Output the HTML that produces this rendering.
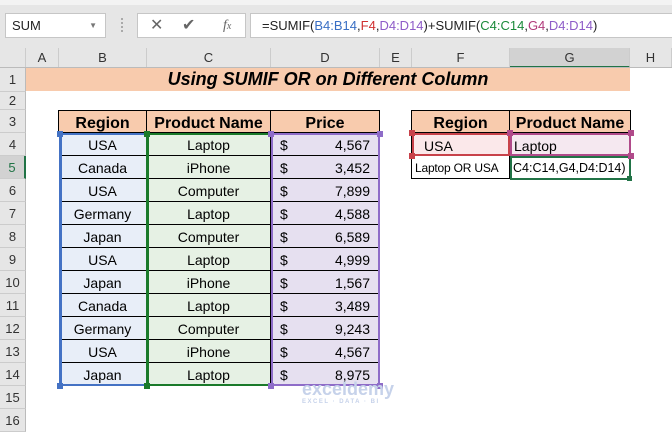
<!DOCTYPE html><html><head><style>
body{margin:0;width:672px;height:425px;overflow:hidden;background:#fff;font-family:"Liberation Sans",Calibri,sans-serif;position:relative}
.a{position:absolute;box-sizing:border-box}
.hd{position:absolute;top:48px;height:20px;font-size:13px;color:#333;text-align:center;line-height:20px;border-right:1px solid #ccc;background:#e6e6e6;box-sizing:border-box}
.rh{position:absolute;left:0;width:26px;font-size:13px;color:#333;text-align:center;background:#e6e6e6;border-bottom:1px solid #ccc;box-sizing:border-box;border-right:1px solid #bbb}
.c{position:absolute;box-sizing:border-box;font-size:14px;color:#000;text-align:center;line-height:25px;border-bottom:1px solid #000;border-right:1px solid #000}
.h{font-weight:bold;font-size:16px;background:#f8cbad;line-height:25px}
.hdl{position:absolute;width:6px;height:6px}
</style></head><body>
<div class="a" style="left:0;top:0;width:672px;height:48px;background:#e6e6e6"></div>
<div class="a" style="left:0;top:0;width:672px;height:5px;background:#f3f3f3"></div>
<div class="a" style="left:5px;top:13px;width:101px;height:25px;background:#fff;border:1px solid #c6c6c6;font-size:13px;line-height:23px;padding-left:6px;color:#222">SUM<span style="position:absolute;right:8px;top:0;font-size:8px;color:#777">▼</span></div>
<div class="a" style="left:121px;top:18px;width:2px;height:14px;border-left:2px dotted #aaa"></div>
<div class="a" style="left:137px;top:13px;width:109px;height:25px;background:#fff;border:1px solid #c6c6c6;font-size:16px;line-height:23px;color:#666"><span style="position:absolute;left:12px">✕</span><span style="position:absolute;left:44px">✔</span><span style="position:absolute;left:85px;font-family:'Liberation Serif';font-style:italic;font-size:14px">f<span style="font-size:10px">x</span></span></div>
<div class="a" style="left:250px;top:13px;width:430px;height:25px;background:#fff;border:1px solid #c6c6c6;font-size:13px;line-height:23px;padding-left:11px;color:#222">=SUMIF(<span style="color:#3a6fc4">B4:B14</span>,<span style="color:#d03030">F4</span>,<span style="color:#8e5cc8">D4:D14</span>)+SUMIF(<span style="color:#1a8a3a">C4:C14</span>,<span style="color:#b03a7a">G4</span>,<span style="color:#8e5cc8">D4:D14</span>)</div>
<div class="hd" style="left:0;width:26px"></div>
<div class="hd" style="left:26px;width:33px">A</div>
<div class="hd" style="left:59px;width:88px">B</div>
<div class="hd" style="left:147px;width:124px">C</div>
<div class="hd" style="left:271px;width:109px">D</div>
<div class="hd" style="left:380px;width:32px">E</div>
<div class="hd" style="left:412px;width:98px">F</div>
<div class="hd" style="left:510px;width:120px;background:#d2d2d2;border-bottom:2px solid #217346">G</div>
<div class="hd" style="left:630px;width:42px">H</div>
<div class="a" style="left:0;top:67px;width:672px;height:1px;background:#bbb"></div>
<div class="rh" style="top:68px;height:24px;line-height:23px">1</div>
<div class="rh" style="top:92px;height:18px;line-height:18px">2</div>
<div class="rh" style="top:110px;height:23px;line-height:24px">3</div>
<div class="rh" style="top:133px;height:23px;line-height:24px">4</div>
<div class="rh" style="top:156px;height:23px;line-height:24px;background:#d2d2d2;color:#217346;border-right:2px solid #217346">5</div>
<div class="rh" style="top:179px;height:23px;line-height:24px">6</div>
<div class="rh" style="top:202px;height:23px;line-height:24px">7</div>
<div class="rh" style="top:225px;height:23px;line-height:24px">8</div>
<div class="rh" style="top:248px;height:23px;line-height:24px">9</div>
<div class="rh" style="top:271px;height:23px;line-height:24px">10</div>
<div class="rh" style="top:294px;height:23px;line-height:24px">11</div>
<div class="rh" style="top:317px;height:23px;line-height:24px">12</div>
<div class="rh" style="top:340px;height:23px;line-height:24px">13</div>
<div class="rh" style="top:363px;height:23px;line-height:24px">14</div>
<div class="rh" style="top:386px;height:23px;line-height:24px">15</div>
<div class="rh" style="top:409px;height:23px;line-height:24px">16</div>
<div class="a" style="left:26px;top:68px;width:604px;height:23px;background:#f8cbad;text-align:center;font-weight:bold;font-style:italic;font-size:18px;line-height:23px">Using SUMIF OR on Different Column</div>
<div class="a" style="left:59px;top:110px;width:321px;height:1px;background:#000"></div>
<div class="a" style="left:58px;top:110px;width:1px;height:23px;background:#000"></div>
<div class="c h" style="left:59px;top:111px;width:88px;height:22px">Region</div>
<div class="c h" style="left:147px;top:111px;width:124px;height:22px">Product Name</div>
<div class="c h" style="left:271px;top:111px;width:109px;height:22px">Price</div>
<div id="rows"></div>
<div class="a" style="left:412px;top:110px;width:219px;height:1px;background:#000"></div>
<div class="a" style="left:411px;top:110px;width:1px;height:69px;background:#000"></div>
<div class="c h" style="left:412px;top:111px;width:98px;height:22px">Region</div>
<div class="c h" style="left:510px;top:111px;width:121px;height:22px">Product Name</div>
<div class="c" style="left:412px;top:133px;width:98px;height:23px;background:#fbe8ea;text-align:left;padding-left:10px;border:2px solid #c8424a;line-height:23px">USA</div>
<div class="c" style="left:510px;top:133px;width:121px;height:23px;background:#f5e8f0;text-align:left;padding-left:2px;border:2px solid #b04a8a;line-height:22px">Laptop</div>
<div class="c" style="left:412px;top:156px;width:98px;height:23px;font-size:12px;padding-left:3px;text-align:left;letter-spacing:-0.2px;white-space:nowrap;overflow:hidden">Laptop OR USA</div>
<div class="c" style="left:510px;top:156px;width:121px;height:24px;font-size:12.5px;text-align:left;padding-left:1px;border:2px solid #217346;line-height:21px;white-space:nowrap;overflow:hidden">C4:C14,G4,D4:D14)</div>
<div class="hdl" style="left:409px;top:130px;background:#c8424a"></div>
<div class="hdl" style="left:409px;top:153px;background:#c8424a"></div>
<div class="hdl" style="left:507px;top:130px;background:#b04a8a"></div>
<div class="hdl" style="left:628px;top:130px;background:#b04a8a"></div>
<div class="hdl" style="left:628px;top:153px;background:#b04a8a"></div>
<div class="hdl" style="left:627px;top:176px;width:5px;height:5px;background:#217346"></div>
<div class="a" style="left:268px;top:380px;width:140px;height:30px;color:#c6d2ea;font-size:18px;font-weight:bold;padding-left:34px;line-height:18px">exceldemy<div style="font-size:6px;letter-spacing:1.5px;line-height:8px">EXCEL · DATA · BI</div></div>
<script>
var d=[["USA","Laptop","4,567"],["Canada","iPhone","3,452"],["USA","Computer","7,899"],["Germany","Laptop","4,588"],["Japan","Computer","6,589"],["USA","Laptop","4,999"],["Japan","iPhone","1,567"],["Canada","Laptop","3,489"],["Germany","Computer","9,243"],["USA","iPhone","4,567"],["Japan","Laptop","8,975"]];
var h="";d.forEach(function(r,i){var t=133+23*i;
h+='<div class="c" style="left:59px;top:'+t+'px;width:88px;height:23px;background:#e8eef8">'+r[0]+'</div>';
h+='<div class="c" style="left:147px;top:'+t+'px;width:124px;height:23px;background:#e6f1e4">'+r[1]+'</div>';
h+='<div class="c" style="left:271px;top:'+t+'px;width:109px;height:23px;background:#e6e0f0;text-align:right;padding-right:9px">'+r[2]+'<span style="position:absolute;left:9px">$</span></div>';});
h+='<div class="a" style="left:59px;top:133px;width:3px;height:253px;background:#4472c4"></div>';
h+='<div class="a" style="left:59px;top:133px;width:88px;height:2px;background:#4472c4"></div>';
h+='<div class="a" style="left:59px;top:384px;width:88px;height:2px;background:#4472c4"></div>';
h+='<div class="a" style="left:146px;top:133px;width:3px;height:253px;background:#1a7a2a"></div>';
h+='<div class="a" style="left:147px;top:133px;width:124px;height:2px;background:#1a7a2a"></div>';
h+='<div class="a" style="left:147px;top:384px;width:124px;height:2px;background:#1a7a2a"></div>';
h+='<div class="a" style="left:271px;top:133px;width:2px;height:253px;background:#8e6cc8"></div>';
h+='<div class="a" style="left:378px;top:133px;width:2px;height:253px;background:#8e6cc8"></div>';
h+='<div class="a" style="left:271px;top:133px;width:109px;height:2px;background:#8e6cc8"></div>';
h+='<div class="a" style="left:271px;top:384px;width:109px;height:2px;background:#8e6cc8"></div>';
[[57,131,"#4472c4"],[57,383,"#4472c4"],[144,131,"#1a7a2a"],[144,383,"#1a7a2a"],[268,131,"#8e6cc8"],[268,383,"#8e6cc8"],[377,131,"#8e6cc8"],[377,383,"#8e6cc8"]].forEach(function(p){h+='<div class="hdl" style="left:'+p[0]+'px;top:'+p[1]+'px;background:'+p[2]+'"></div>';});
document.getElementById("rows").innerHTML=h;
</script>
</body></html>
